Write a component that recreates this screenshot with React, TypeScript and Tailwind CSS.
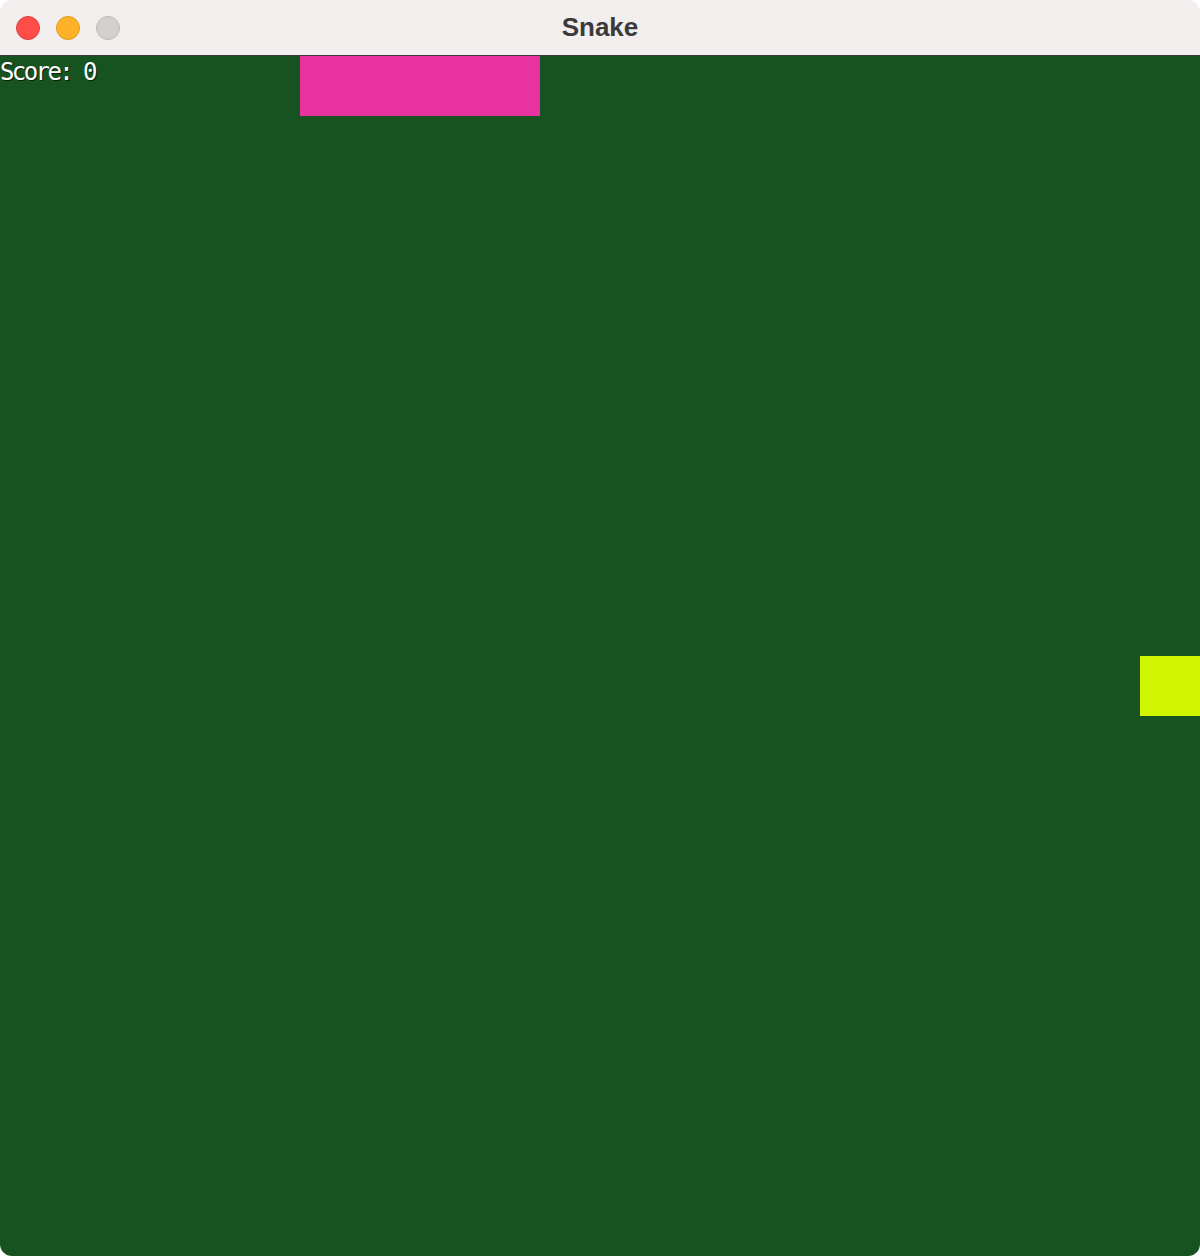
import React from 'react';

const App: React.FC = () => {
  return (
    <div className="w-[1200px] h-[1256px] bg-white">
      <div className="flex flex-col w-full h-full rounded-[12px] overflow-hidden">
        {/* title bar */}
        <div className="relative flex items-center justify-center h-[56px] bg-[#f2eeee] border-b border-[#3b3b3b] shrink-0">
          <div className="absolute left-[16px] top-[16px] flex gap-[16px]">
            <span className="w-[24px] h-[24px] rounded-full bg-[#fe4c48] border border-[#e0403c]" />
            <span className="w-[24px] h-[24px] rounded-full bg-[#feb128] border border-[#e09a20]" />
            <span className="w-[24px] h-[24px] rounded-full bg-[#d3d0d0] border border-[#bcb9b9]" />
          </div>
          <span className="text-[26px] font-bold text-[#3b3a3a] font-['Liberation_Sans',sans-serif]">Snake</span>
        </div>
        {/* game board */}
        <div className="relative flex-1 bg-[#175320]">
          <span className="absolute left-0 top-[2px] text-[24px] leading-[28px] tracking-[-2.6px] text-white font-['DejaVu_Sans_Mono',monospace] [text-shadow:1px_1px_0_#06200c]">
            Score: 0
          </span>
          <div className="absolute left-[300px] top-0 w-[240px] h-[60px] bg-[#e833a0]" />
          <div className="absolute left-[1140px] top-[600px] w-[60px] h-[60px] bg-[#cff500]" />
        </div>
      </div>
    </div>
  );
};

export default App;
